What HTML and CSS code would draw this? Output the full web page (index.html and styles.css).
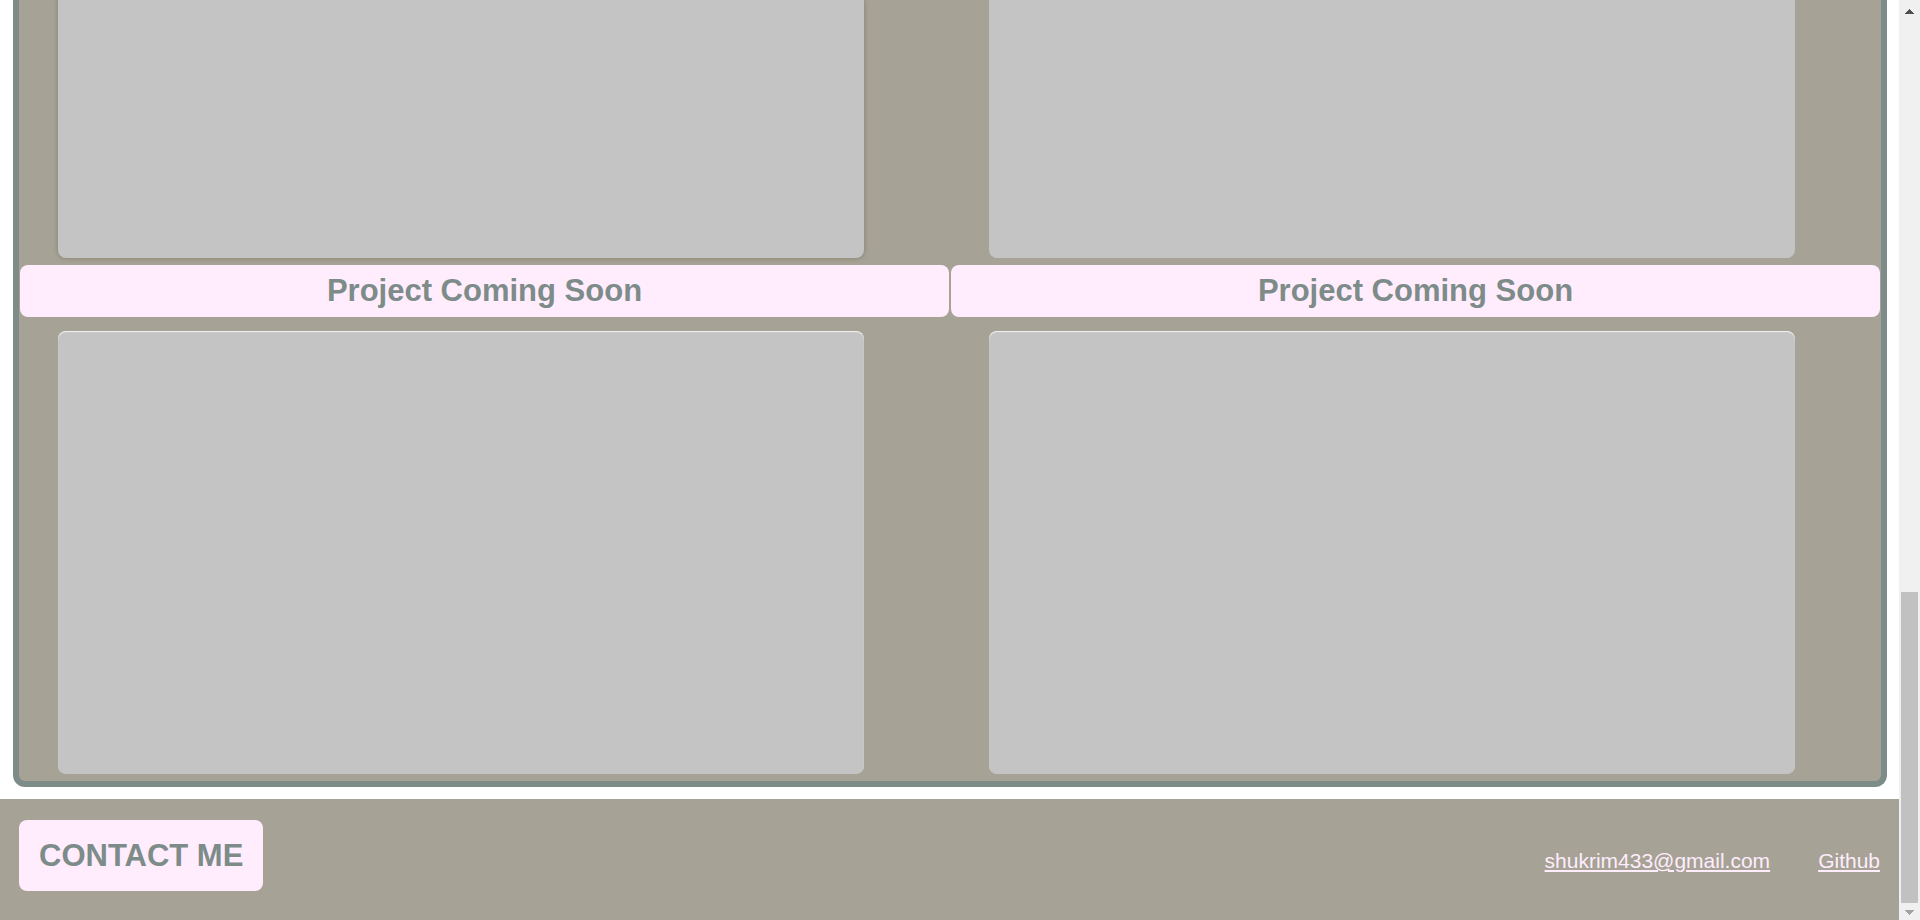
FILE: index.html
```html
<!DOCTYPE html>
<html lang="en">
<head>
<meta charset="utf-8">
<title>Portfolio</title>
<link rel="stylesheet" href="styles.css">
</head>
<body>
<div class="page">
  <main class="projects">
    <article class="project"><div class="preview preview-cut preview-active"></div></article>
    <article class="project"><div class="preview preview-cut"></div></article>
    <article class="project">
      <h2 class="project-title">Project Coming Soon</h2>
      <div class="preview preview-lit"></div>
    </article>
    <article class="project">
      <h2 class="project-title">Project Coming Soon</h2>
      <div class="preview preview-lit"></div>
    </article>
  </main>
  <footer class="footer">
    <h2 class="contact">CONTACT ME</h2>
    <nav class="links">
      <a href="mailto:shukrim433@gmail.com">shukrim433@gmail.com</a>
      <a href="#github">Github</a>
    </nav>
  </footer>
</div>
<div class="scrollbar" aria-hidden="true">
  <svg class="arrow" width="21" height="17" viewBox="0 0 21 17" shape-rendering="crispEdges"><path d="M6 14v-1h1v-1h1v-1h1v-1h1v-1h1v1h1v1h1v1h1v1h1v1z" fill="#505050"/></svg>
  <div class="track"><div class="thumb"></div></div>
  <svg class="arrow" width="21" height="17" viewBox="0 0 21 17" shape-rendering="crispEdges"><path d="M6 7v1h1v1h1v1h1v1h1v1h1v-1h1v-1h1v-1h1v-1h1v-1z" fill="#a3a3a3"/></svg>
</div>
</body>
</html>
```
FILE: styles.css
```css
* { box-sizing: border-box; }
body {
  margin: 0;
  display: flex;
  height: 100vh;
  overflow: hidden;
  background: #fff;
  font-family: "Liberation Sans", Arial, sans-serif;
}
.page {
  flex: 1;
  display: flex;
  flex-direction: column;
}
.projects {
  display: grid;
  grid-template-columns: 1fr 1fr;
  margin: 0 12px 12px 13px;
  padding-bottom: 7px;
  border: 6px solid #7d8b89;
  border-top: 0;
  border-radius: 0 0 12px 12px;
  background: #a6a295;
}
.preview {
  width: 806px;
  max-width: 87%;
  height: 443px;
  margin-left: 39px;
  border-radius: 8px;
  background: #c4c4c4;
}
.preview-cut {
  height: 258px;
  margin-bottom: 7px;
  border-radius: 0 0 8px 8px;
}
.preview-active { box-shadow: 0 0 4px 1px #8e8a78; }
.preview-lit { box-shadow: inset 0 1px 1px #f4f4f2; }
.project-title {
  margin: 0 1px 14px;
  padding: 8px;
  border-radius: 8px;
  background: #ffedfd;
  color: #7d8b89;
  font-size: 31px;
  line-height: 36px;
  text-align: center;
}
.footer {
  flex: 1;
  display: flex;
  justify-content: space-between;
  align-items: flex-start;
  padding: 21px 19px;
  background: #a6a295;
}
.contact {
  margin: 0;
  padding: 18px 20px;
  border-radius: 8px;
  background: #ffedfd;
  color: #7d8b89;
  font-size: 31px;
  line-height: 35px;
}
.links {
  display: flex;
  gap: 48px;
  padding-top: 28px;
  font-size: 21px;
  line-height: 25px;
}
.links a { color: #ffedfd; }
.scrollbar {
  flex: none;
  display: flex;
  flex-direction: column;
  width: 21px;
  background: #f0f0f0;
}
.arrow { display: block; }
.track {
  flex: 1;
  display: flex;
  flex-direction: column;
  justify-content: flex-end;
  padding: 0 2px;
}
.thumb { height: 35.1%; background: #c1c1c1; }
```
